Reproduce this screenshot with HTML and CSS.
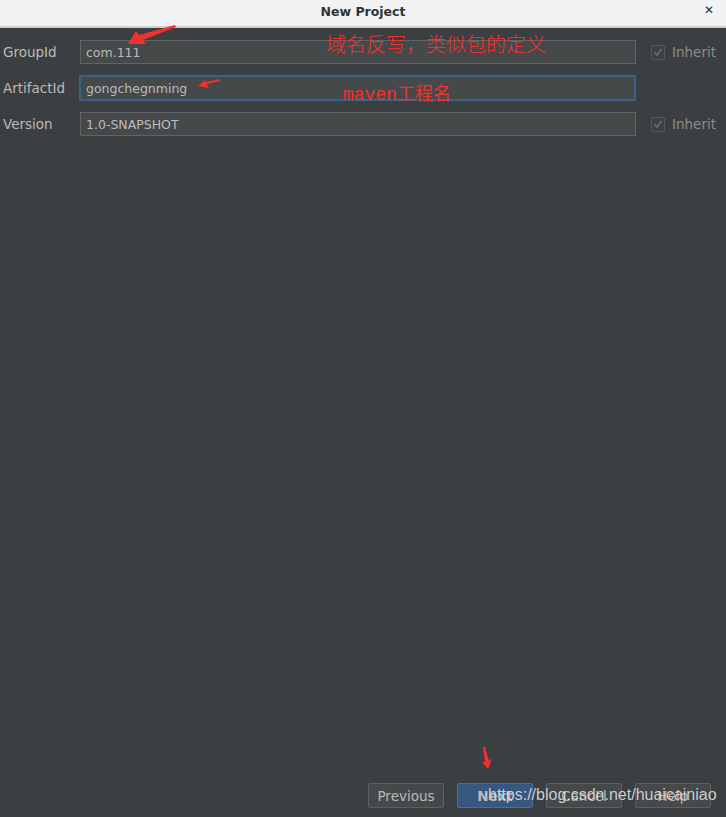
FILE: index.html
```html
<!DOCTYPE html>
<html lang="en">
<head>
  <meta charset="UTF-8">
  <title>New Project</title>
  <link rel="stylesheet" href="styles.css">
</head>
<body>

<!-- Window title bar -->
<div class="titlebar">
  <span class="title">New Project</span>
  <span class="close">&#x2715;</span>
</div>

<!-- Maven coordinates form -->
<div class="content">
  <div class="form">
    <label class="label">GroupId</label>
    <div class="field">com.111</div>
    <div class="inherit"><span class="check"><svg viewBox="0 0 14 14" width="14" height="14"><path d="M3 7.5 L6 10.5 L11 3.5" fill="none" stroke="#6c6e70" stroke-width="1.8"/></svg></span>Inherit</div>

    <label class="label">ArtifactId</label>
    <div class="field focused">gongchegnming</div>
    <div></div>

    <label class="label">Version</label>
    <div class="field">1.0-SNAPSHOT</div>
    <div class="inherit"><span class="check"><svg viewBox="0 0 14 14" width="14" height="14"><path d="M3 7.5 L6 10.5 L11 3.5" fill="none" stroke="#6c6e70" stroke-width="1.8"/></svg></span>Inherit</div>
  </div>

  <!-- Dialog buttons -->
  <div class="buttons">
    <div class="btn">Previous</div>
    <div class="btn primary">Next</div>
    <div class="btn">Cancel</div>
    <div class="btn">Help</div>
  </div>
</div>

<!-- Red annotations drawn over the screenshot -->
<div class="note note-group">域名反写，类似包的定义</div>
<div class="note note-artifact">maven工程名</div>

<svg class="arrows" width="726" height="817" viewBox="0 0 726 817">
  <polygon points="128,44 136,31 139,35 175,25 176,27 143,40 146,44" fill="#f1312d"/>
  <polygon points="198,86 205,80 206,82 220,79 220,81 207,84 209,88" fill="#f1312d"/>
  <polygon points="488,769 482,762 485,762 483,747 485,747 489,761 492,759" fill="#f1312d"/>
</svg>

<div class="watermark">https://blog.csdn.net/huaicainiao</div>

</body>
</html>
```

FILE: styles.css
```css
/* General reset */
* {
  margin: 0;
  padding: 0;
  box-sizing: border-box;
}

body {
  width: 726px;
  height: 817px;
  background-color: #3c3f41;
  font-family: "DejaVu Sans", sans-serif;
  font-size: 13px;
  color: #bbbbbb;
  display: flex;
  flex-direction: column;
  position: relative;
  overflow: hidden;
}

/* Title bar */
.titlebar {
  height: 28px;
  background-color: #f2f2f2;
  border-bottom: 2px solid #cfcfcf;
  display: flex;
  align-items: center;
  justify-content: center;
  position: relative;
  color: #2e3436;
}

.title {
  font-weight: bold;
  font-size: 12.5px;
  margin-bottom: 4px;
}

.close {
  position: absolute;
  right: 12px;
  top: 3px;
  font-size: 12px;
  font-weight: bold;
  color: #2e3436;
}

/* Main area */
.content {
  flex: 1;
  display: flex;
  flex-direction: column;
  justify-content: space-between;
  padding: 12px 15px 9px 0;
}

.form {
  display: grid;
  grid-template-columns: 80px 556px 1fr;
  grid-auto-rows: 24px;
  row-gap: 12px;
  align-items: center;
}

.label {
  padding-left: 3px;
  font-size: 13.5px;
  color: #bbbbbb;
}

.field {
  height: 24px;
  background-color: #45494a;
  border: 1px solid #646464;
  padding: 0 5px;
  display: flex;
  align-items: center;
  font-size: 12.5px;
  color: #bbbbbb;
}

.field.focused {
  height: 26px;
  margin-left: -1px;
  border: 2px solid #3d6185;
  padding-left: 5px;
}

.inherit {
  display: flex;
  align-items: center;
  padding-left: 15px;
  color: #8c8c8c;
  font-size: 13.5px;
}

.check {
  width: 14px;
  height: 15px;
  border: 1px solid #555759;
  border-radius: 2px;
  background-color: #3e4143;
  margin-right: 7px;
  display: flex;
  align-items: center;
  justify-content: center;
}

/* Bottom buttons */
.buttons {
  display: flex;
  justify-content: flex-end;
  gap: 13px;
}

.btn {
  width: 76px;
  height: 25px;
  border: 1px solid #5e6060;
  border-radius: 2px;
  background-color: #45494a;
  display: flex;
  align-items: center;
  justify-content: center;
  font-size: 13.5px;
  color: #bbbbbb;
}

.btn.primary {
  background-color: #365880;
  border-color: #4c6f93;
  font-weight: bold;
}

/* Annotations overlay */
.note {
  position: absolute;
  color: #f1312d;
  font-family: "Liberation Mono", "Noto Sans CJK SC", monospace;
  white-space: nowrap;
}

.note-group {
  left: 326px;
  top: 29px;
  font-size: 20px;
  font-weight: 300;
}

.note-artifact {
  left: 343px;
  top: 79px;
  font-size: 18px;
}

.arrows {
  position: absolute;
  left: 0;
  top: 0;
  pointer-events: none;
}

.watermark {
  position: absolute;
  left: 488px;
  top: 786px;
  font-family: "Liberation Sans", sans-serif;
  font-size: 16px;
  color: rgba(255, 255, 255, 0.78);
  text-shadow: 0 0 1px rgba(0, 0, 0, 0.4);
}
```
